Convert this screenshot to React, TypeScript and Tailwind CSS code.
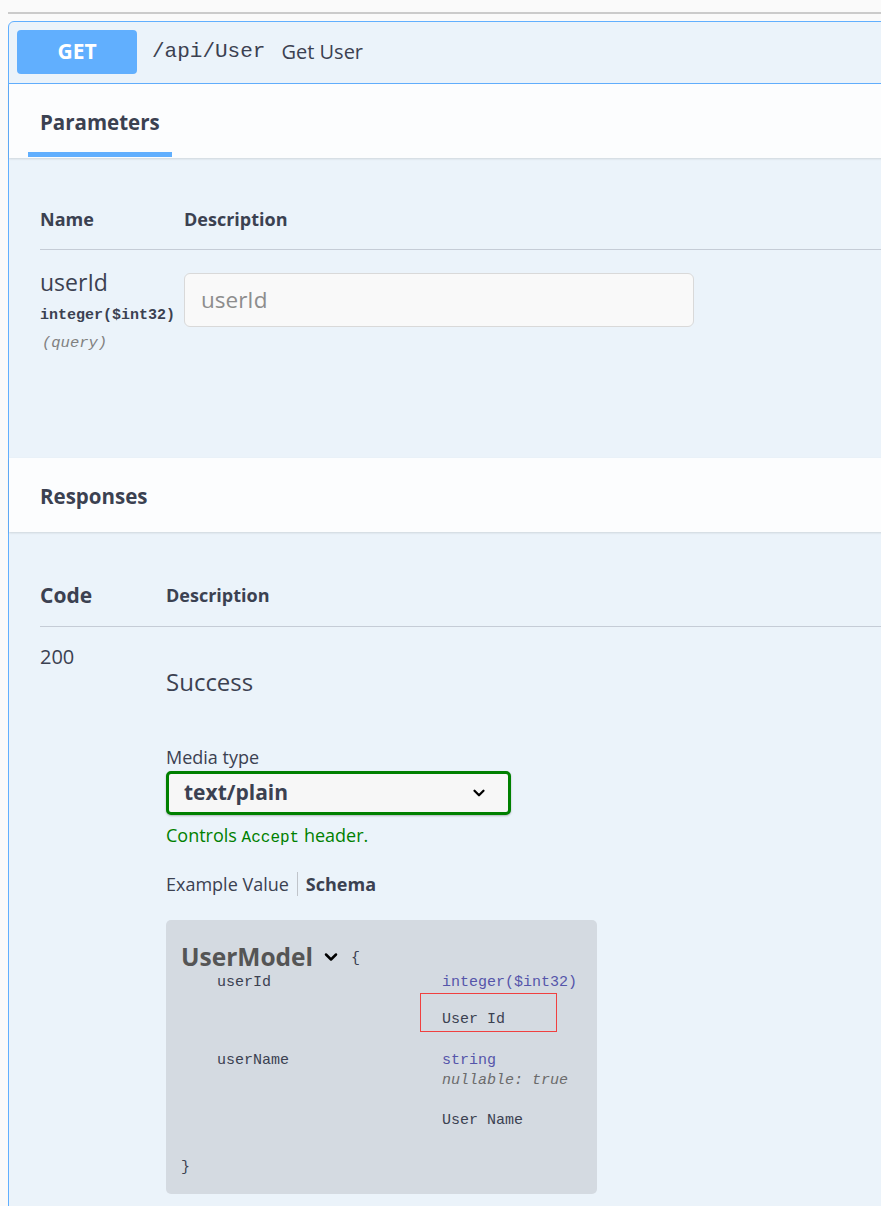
import { ChevronDown } from 'lucide-react'

const sans = 'font-["Open_Sans","Noto_Sans",sans-serif]'
const mono = 'font-["Liberation_Mono","DejaVu_Sans_Mono",monospace]'

const Chevron = ({ className }: { className?: string }) => (
  <svg viewBox="0 0 24 24" className={className} fill="none" stroke="currentColor" strokeWidth={3} strokeLinecap="round" strokeLinejoin="round">
    <path d="M6 9l6 6 6-6" />
  </svg>
)

const SectionHeader = ({ title, tab }: { title: string; tab?: boolean }) => (
  <div className="h-[74px] bg-[#fcfdfe] shadow-[0_1px_2px_rgba(0,0,0,0.12)] flex">
    {tab ? (
      <div className="ml-[19px] flex flex-col">
        <div className="pt-[23px] px-[12px] leading-[30px] text-[20.5px] font-bold text-[#3b4151]">{title}</div>
        <div className="mt-[15px] h-[5px] bg-[#61affe]" />
      </div>
    ) : (
      <div className="pl-[31px] pt-[23px] leading-[30px] text-[20.5px] font-bold text-[#3b4151]">{title}</div>
    )}
  </div>
)

export default function App() {
  return (
    <div className={`${sans} min-h-screen w-full overflow-hidden bg-[#fafafa] text-[#3b4151]`}>
      <div className="pt-[12px] pl-[8px]">
        <div className="h-[2px] bg-[#cbcbcb]" />
      </div>

      <div className="ml-[8px] -mr-[20px] mt-[7px] border border-[#61affe] rounded-[6px] bg-[#ebf3fa]">
        {/* summary */}
        <div className="flex items-center px-[8px] pt-[8px] pb-[9px] border-b border-[#61affe]">
          <div className="w-[120px] h-[44px] rounded-[4px] bg-[#61affe] text-white font-bold text-[21px] flex items-center justify-center">
            GET
          </div>
          <span className={`${mono} ml-[15px] text-[21px] text-[#3b4151]`}>/api/User</span>
          <span className="ml-[16px] text-[20px] text-[#3b4151]">Get User</span>
        </div>

        <SectionHeader title="Parameters" tab />

        {/* parameters table */}
        <div className="pl-[31px] pt-[49px] pb-[103px]">
          <div className="flex border-b border-[#c5ccd6] pb-[18px] text-[18px] font-bold leading-[24px]">
            <div className="w-[144px]">Name</div>
            <div>Description</div>
          </div>
          <div className="flex pt-[17px]">
            <div className="w-[144px]">
              <div className="text-[23px] leading-[30px]">userId</div>
              <div className={`${mono} text-[15px] font-bold leading-[26px] mt-[6px]`}>integer($int32)</div>
              <div className={`${mono} text-[15.5px] italic text-[#808080] leading-[24px] mt-[2px] ml-[2px]`}>(query)</div>
            </div>
            <div className="pt-[6px]">
              <div className="w-[510px] h-[54px] rounded-[6px] border border-[#d9d9d9] bg-[#f9f9f9] flex items-center pl-[16px] text-[22.5px] text-[#8d8d8d]">
                userId
              </div>
            </div>
          </div>
        </div>

        <SectionHeader title="Responses" />

        {/* responses table */}
        <div className="pl-[31px] pt-[49px] pb-[40px]">
          <div className="flex items-center border-b border-[#c5ccd6] pb-[17px] font-bold leading-[28px]">
            <div className="w-[126px] text-[21px]">Code</div>
            <div className="text-[18px]">Description</div>
          </div>
          <div className="flex pt-[15px]">
            <div className="w-[126px] text-[20px] leading-[30px]">200</div>
            <div>
              <div className="pt-[25px] text-[24px] leading-[30px]">Success</div>
              <div className="mt-[48px] text-[18px] leading-[24px]">Media type</div>
              <div className="mt-[2px] w-[345px] h-[44px] rounded-[5px] border-[3px] border-[#008000] bg-[#f7f7f7] shadow-[0_1px_2px_rgba(0,0,0,0.25)] flex items-center justify-between pl-[15px] pr-[20px]">
                <span className="text-[21px] font-bold">text/plain</span>
                <Chevron className="w-[18px] h-[18px] text-black" />
              </div>
              <div className="mt-[8px] text-[18px] leading-[24px] text-[#008000]">
                Controls <span className={`${mono} text-[16px]`}>Accept</span> header.
              </div>
              <div className="mt-[22px] flex items-center text-[18px] leading-[24px]">
                <span>Example Value</span>
                <span className="mx-[8px] w-px h-[24px] bg-[#c0c4ca]" />
                <span className="font-bold">Schema</span>
              </div>

              {/* model box */}
              <div className={`${mono} mt-[24px] w-[431px] rounded-[5px] bg-[#d4dae1] pl-[15px] pt-[21px] pb-[16px] text-[15px] leading-[20px]`}>
                <div className="flex items-center h-[32px]">
                  <span className={`${sans} text-[24.5px] font-bold text-[#555]`}>UserModel</span>
                  <ChevronDown className="ml-[8px] w-[20px] h-[20px] text-black" strokeWidth={3} />
                  <span className="ml-[10px] mt-[4px] text-[15px]">{'{'}</span>
                </div>
                <div className="pl-[36px]">
                  <div className="flex">
                    <div className="w-[225px]">userId</div>
                    <div>
                      <div className="text-[#55a]">integer($int32)</div>
                      <div className="-ml-[22px] w-[137px] h-[39px] border border-[#f04040] pl-[21px] pt-[16px]">User Id</div>
                    </div>
                  </div>
                  <div className="flex mt-[19px]">
                    <div className="w-[225px]">userName</div>
                    <div>
                      <div className="text-[#55a]">string</div>
                      <div className="italic text-[#6b6b6b]">nullable: true</div>
                      <div className="mt-[20px]">User Name</div>
                    </div>
                  </div>
                </div>
                <div className="mt-[27px]">{'}'}</div>
              </div>
            </div>
          </div>
        </div>
      </div>
    </div>
  )
}
